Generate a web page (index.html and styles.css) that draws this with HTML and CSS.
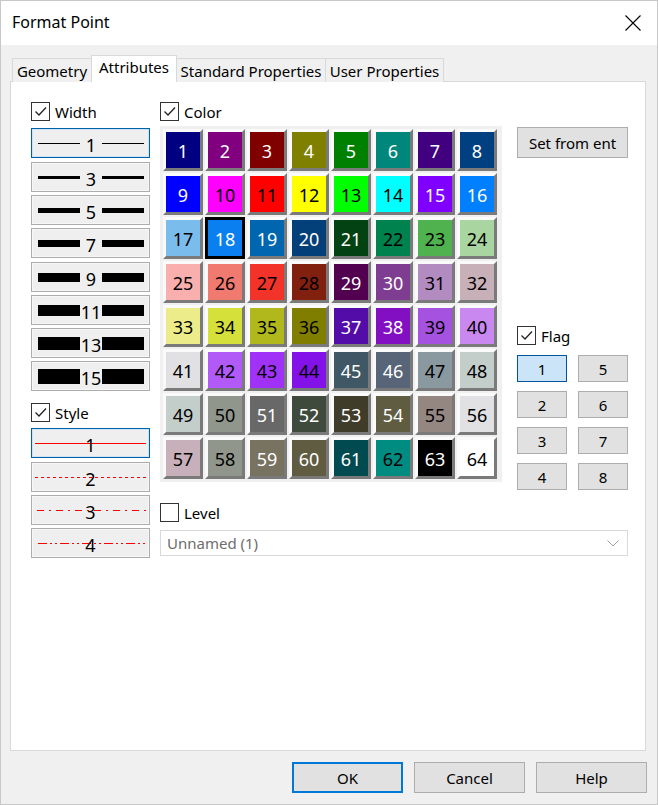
FILE: index.html
```html
<!DOCTYPE html>
<html>
<head>
<meta charset="utf-8">
<link rel="stylesheet" href="styles.css">
</head>
<body>
<div class="win">
  <div class="titlebar">
    <span class="title">Format Point</span>
    <svg class="close" width="16" height="16" viewBox="0 0 16 16"><path d="M0.5 0.5 L15.5 15.5 M15.5 0.5 L0.5 15.5" stroke="#000" stroke-width="1.1" fill="none"/></svg>
  </div>
  <div class="body">
    <div class="tabs">
      <div class="tab t1">Geometry</div>
      <div class="tab t2 active">Attributes</div>
      <div class="tab t3">Standard Properties</div>
      <div class="tab t4">User Properties</div>
    </div>
    <div class="panel">
      <div class="leftcol">
        <div class="chk"><span class="box"><svg viewBox="0 0 17 17" width="17" height="17"><path d="M3.5 8.5 L7 12 L14 4.5" stroke="#222" stroke-width="1.3" fill="none"/></svg></span>Width</div>
        <div class="wlist">
          <div class="wbtn sel"><span class="ln" style="height:1px"></span><span class="num">1</span><span class="ln" style="height:1px"></span></div>
          <div class="wbtn"><span class="ln" style="height:3px"></span><span class="num">3</span><span class="ln" style="height:3px"></span></div>
          <div class="wbtn"><span class="ln" style="height:5px"></span><span class="num">5</span><span class="ln" style="height:5px"></span></div>
          <div class="wbtn"><span class="ln" style="height:7px"></span><span class="num">7</span><span class="ln" style="height:7px"></span></div>
          <div class="wbtn"><span class="ln" style="height:9px"></span><span class="num">9</span><span class="ln" style="height:9px"></span></div>
          <div class="wbtn"><span class="ln" style="height:11px"></span><span class="num">11</span><span class="ln" style="height:11px"></span></div>
          <div class="wbtn"><span class="ln" style="height:13px"></span><span class="num">13</span><span class="ln" style="height:13px"></span></div>
          <div class="wbtn"><span class="ln" style="height:15px"></span><span class="num">15</span><span class="ln" style="height:15px"></span></div>
        </div>
        <div class="chk style-chk"><span class="box"><svg viewBox="0 0 17 17" width="17" height="17"><path d="M3.5 8.5 L7 12 L14 4.5" stroke="#222" stroke-width="1.3" fill="none"/></svg></span>Style</div>
        <div class="slist">
          <div class="sbtn sel"><span class="sl s1"></span><span class="snum">1</span></div>
          <div class="sbtn"><span class="sl s2"></span><span class="snum">2</span></div>
          <div class="sbtn"><span class="sl s3"></span><span class="snum">3</span></div>
          <div class="sbtn"><span class="sl s4"></span><span class="snum">4</span></div>
        </div>
      </div>
      <div class="rightarea">
        <div class="toprow">
          <div class="colorblock">
            <div class="chk"><span class="box"><svg viewBox="0 0 17 17" width="17" height="17"><path d="M3.5 8.5 L7 12 L14 4.5" stroke="#222" stroke-width="1.3" fill="none"/></svg></span>Color</div>
            <div class="grid">
              <div class="cell lt" style="--c:#000080">1</div>
              <div class="cell lt" style="--c:#800080">2</div>
              <div class="cell lt" style="--c:#800000">3</div>
              <div class="cell lt" style="--c:#808000">4</div>
              <div class="cell lt" style="--c:#008000">5</div>
              <div class="cell lt" style="--c:#00877b">6</div>
              <div class="cell lt" style="--c:#400080">7</div>
              <div class="cell lt" style="--c:#004080">8</div>
              <div class="cell lt" style="--c:#0000ff">9</div>
              <div class="cell" style="--c:#ff00ff">10</div>
              <div class="cell" style="--c:#ff0000">11</div>
              <div class="cell" style="--c:#ffff00">12</div>
              <div class="cell" style="--c:#00ff00">13</div>
              <div class="cell" style="--c:#00ffff">14</div>
              <div class="cell lt" style="--c:#8000ff">15</div>
              <div class="cell lt" style="--c:#0080ff">16</div>
              <div class="cell" style="--c:#7abcec">17</div>
              <div class="cell lt selcell" style="--c:#0a80f0">18</div>
              <div class="cell lt" style="--c:#0066b0">19</div>
              <div class="cell lt" style="--c:#033f78">20</div>
              <div class="cell lt" style="--c:#034212">21</div>
              <div class="cell" style="--c:#00824e">22</div>
              <div class="cell" style="--c:#4fb24f">23</div>
              <div class="cell" style="--c:#a8d5a0">24</div>
              <div class="cell" style="--c:#f8afad">25</div>
              <div class="cell" style="--c:#f07a70">26</div>
              <div class="cell" style="--c:#f23329">27</div>
              <div class="cell" style="--c:#822010">28</div>
              <div class="cell lt" style="--c:#520050">29</div>
              <div class="cell lt" style="--c:#7f3d92">30</div>
              <div class="cell" style="--c:#b28cc0">31</div>
              <div class="cell" style="--c:#c8b0b8">32</div>
              <div class="cell" style="--c:#eced8a">33</div>
              <div class="cell" style="--c:#d6e03a">34</div>
              <div class="cell" style="--c:#b1b81c">35</div>
              <div class="cell" style="--c:#807e00">36</div>
              <div class="cell lt" style="--c:#540ca8">37</div>
              <div class="cell lt" style="--c:#8210c2">38</div>
              <div class="cell" style="--c:#a552e0">39</div>
              <div class="cell" style="--c:#c888f0">40</div>
              <div class="cell" style="--c:#e1e1e4">41</div>
              <div class="cell" style="--c:#b25af8">42</div>
              <div class="cell" style="--c:#a032f8">43</div>
              <div class="cell" style="--c:#8212e8">44</div>
              <div class="cell lt" style="--c:#405866">45</div>
              <div class="cell lt" style="--c:#586478">46</div>
              <div class="cell" style="--c:#8a98a0">47</div>
              <div class="cell" style="--c:#c3cecb">48</div>
              <div class="cell" style="--c:#c3cecb">49</div>
              <div class="cell" style="--c:#90968c">50</div>
              <div class="cell lt" style="--c:#686868">51</div>
              <div class="cell lt" style="--c:#3f4a3c">52</div>
              <div class="cell lt" style="--c:#403c2a">53</div>
              <div class="cell lt" style="--c:#605c42">54</div>
              <div class="cell" style="--c:#948680">55</div>
              <div class="cell" style="--c:#e1e1e4">56</div>
              <div class="cell" style="--c:#c8b0ba">57</div>
              <div class="cell" style="--c:#90968c">58</div>
              <div class="cell lt" style="--c:#787260">59</div>
              <div class="cell lt" style="--c:#605c42">60</div>
              <div class="cell lt" style="--c:#004a50">61</div>
              <div class="cell" style="--c:#008c80">62</div>
              <div class="cell lt" style="--c:#000000">63</div>
              <div class="cell" style="--c:#ffffff">64</div>
            </div>
          </div>
          <div class="rightcol">
            <div class="btn setfrom">Set from ent</div>
            <div class="chk flag-chk"><span class="box"><svg viewBox="0 0 17 17" width="17" height="17"><path d="M3.5 8.5 L7 12 L14 4.5" stroke="#222" stroke-width="1.3" fill="none"/></svg></span>Flag</div>
            <div class="flags">
              <div class="btn fb fsel">1</div>
              <div class="btn fb">5</div>
              <div class="btn fb">2</div>
              <div class="btn fb">6</div>
              <div class="btn fb">3</div>
              <div class="btn fb">7</div>
              <div class="btn fb">4</div>
              <div class="btn fb">8</div>
            </div>
          </div>
        </div>
        <div class="chk level-chk"><span class="box"></span>Level</div>
        <div class="combo"><span>Unnamed (1)</span><svg width="12" height="7" viewBox="0 0 12 7"><path d="M0.5 0.5 L6 6 L11.5 0.5" stroke="#a0a0a0" stroke-width="1" fill="none"/></svg></div>
      </div>
    </div>
    <div class="footer">
      <div class="btn fbtn ok">OK</div>
      <div class="btn fbtn">Cancel</div>
      <div class="btn fbtn">Help</div>
    </div>
  </div>
</div>
</body>
</html>
```
FILE: styles.css
```css
* { box-sizing: border-box; }
html, body { margin: 0; padding: 0; }
body {
  font-family: "Noto Sans", "Open Sans", sans-serif;
  font-size: 15px;
  color: #000;
  background: #f0f0f0;
}
.win {
  width: 658px;
  height: 805px;
  border: 1px solid #c8c8c8;
  background: #f0f0f0;
  display: flex;
  flex-direction: column;
}
.titlebar {
  height: 44px;
  background: #fff;
  display: flex;
  align-items: center;
  justify-content: space-between;
  padding: 0 16px 0 11px;
  flex: none;
}
.title { font-size: 16px; margin-top: -2px; }
.close { display: block; margin-top: -1px; }
.body {
  flex: 1;
  display: flex;
  flex-direction: column;
  padding: 10px 11px 0 9px;
}
.tabs {
  display: flex;
  align-items: flex-end;
  padding-left: 2px;
  height: 27px;
  margin-bottom: -1px;
  position: relative;
  z-index: 1;
}
.tab {
  height: 24px;
  border: 1px solid #d9d9d9;
  border-bottom: none;
  background: #f0f0f0;
  display: flex;
  align-items: center;
  justify-content: center;
  padding-top: 1px;
  white-space: nowrap;
  margin-left: -1px;
}
.tab:first-child { margin-left: 0; }
.t1 { width: 80px; }
.t2 { width: 86px; }
.t3 { width: 150px; }
.t4 { width: 119px; }
.tab.active {
  height: 27px;
  background: #fff;
  position: relative;
  padding-top: 0;
  padding-bottom: 4px;
}
.panel {
  height: 670px;
  background: #fff;
  border: 1px solid #d9d9d9;
  display: flex;
  padding: 20px 0 0 20px;
}
.leftcol { width: 119px; margin-right: 10px; }
.chk {
  display: flex;
  align-items: center;
  height: 19px;
  white-space: nowrap;
}
.box {
  width: 19px;
  height: 19px;
  border: 1px solid #333;
  background: #fff;
  margin-right: 5px;
  flex: none;
  display: flex;
  align-items: center;
  justify-content: center;
}
.box svg { display: block; }
.wlist { margin-top: 7px; display: flex; flex-direction: column; gap: 3px; }
.wlist > :nth-child(2), .wlist > :nth-child(5) { margin-top: 1px; }
.wbtn {
  height: 30px;
  border: 1px solid #adadad;
  background: #efefef;
  box-shadow: inset 0 0 0 1px #f7f7f7;
  display: flex;
  align-items: center;
  padding: 0 5px 0 6px;
}
.wbtn.sel {
  border-color: #0060aa;
  box-shadow: inset 0 0 0 1px #cde3f6;
}
.ln { flex: 1; background: #000; }
.num {
  width: 22px;
  text-align: center;
  font-size: 18px;
  line-height: 18px;
  margin-top: 3px;
}
.style-chk { margin-top: 12px; }
.slist { margin-top: 6px; display: flex; flex-direction: column; gap: 3px; }
.slist > :nth-child(2) { margin-top: 1px; }
.sbtn {
  height: 30px;
  border: 1px solid #adadad;
  background: #efefef;
  box-shadow: inset 0 0 0 1px #f7f7f7;
  display: grid;
  grid-template-rows: 28px;
  align-items: center;
  justify-items: center;
  padding: 0 3px;
}
.sbtn.sel { border-color: #0060aa; box-shadow: inset 0 0 0 1px #cde3f6; }
.sbtn > * { grid-area: 1 / 1; }
.sl {
  display: block;
  justify-self: stretch;
  height: 1px;
  margin-top: 1px;
}
.s1 { background: #ff0000; }
.s2 { background: repeating-linear-gradient(to right, #ff0000 0 3px, transparent 3px 6px); }
.s3 { background: repeating-linear-gradient(to right, #ff0000 0 7px, transparent 7px 12px, #ff0000 12px 14px, transparent 14px 19px); margin-left: 2px; }
.s4 { background: repeating-linear-gradient(to right, #ff0000 0 9px, transparent 9px 12px, #ff0000 12px 14px, transparent 14px 17px, #ff0000 17px 19px, transparent 19px 22px); margin-left: 3px; }
.snum { font-size: 18px; line-height: 18px; margin-top: 4px; }
.rightarea { width: 468px; }
.toprow { display: flex; height: 380px; align-items: flex-start; }
.colorblock { width: 342px; margin-right: 15px; }
.grid {
  margin-top: 5px;
  background: #f0f0f0;
  height: 356px;
  padding: 3px 5px 3px 3px;
  display: grid;
  grid-template-columns: repeat(8, 40px);
  grid-auto-rows: 42px;
  gap: 2px;
}
.cell {
  background: var(--c);
  border-style: solid;
  border-width: 3px;
  border-color: #fafafa #7a7a7a #7a7a7a #fafafa;
  display: flex;
  align-items: center;
  justify-content: center;
  font-size: 18px;
  padding-top: 2px;
  color: #000;
}
.cell.lt { color: #fff; }
.cell.selcell { border-color: #000; }
.rightcol { width: 111px; }
.btn {
  background: #e1e1e1;
  border: 1px solid #adadad;
  display: flex;
  align-items: center;
  justify-content: center;
  white-space: nowrap;
}
.setfrom { margin-top: 25px; height: 31px; }
.flag-chk { margin-top: 168px; }
.flags {
  margin-top: 10px;
  display: grid;
  grid-template-columns: 50px 50px;
  grid-template-rows: repeat(4, 27px);
  column-gap: 11px;
  row-gap: 9px;
}
.fb { padding-top: 1px; }
.fsel { background: #cce4f7; border-color: #005499; }
.level-chk { margin-top: 21px; }
.combo {
  margin-top: 8px;
  height: 26px;
  border: 1px solid #d9d9d9;
  background: #fff;
  color: #6d6d6d;
  display: flex;
  align-items: center;
  justify-content: space-between;
  padding: 0 8px 0 6px;
}
.combo svg { display: block; }
.footer {
  display: flex;
  justify-content: flex-end;
  gap: 11px;
  margin-top: 11px;
  margin-right: -1px;
}
.fbtn { width: 111px; height: 31px; }
.fbtn.ok { border: 2px solid #0078d7; }
```
